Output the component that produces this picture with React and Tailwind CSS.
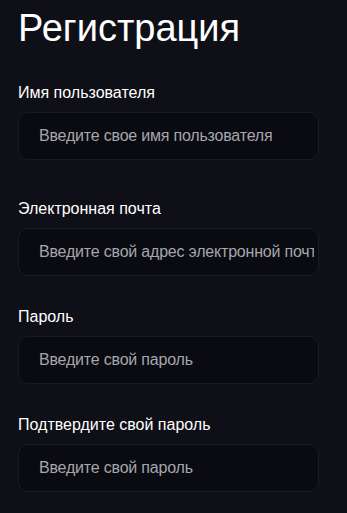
import React, { useState } from "react";

const fields = [
  { id: "username", label: "Имя пользователя", type: "text", placeholder: "Введите свое имя пользователя", wrap: "mt-[34px] mb-[39px]" },
  { id: "email", label: "Электронная почта", type: "email", placeholder: "Введите свой адрес электронной почты", wrap: "mb-[31px]" },
  { id: "password", label: "Пароль", type: "password", placeholder: "Введите свой пароль", wrap: "mb-[31px]" },
  { id: "confirm", label: "Подтвердите свой пароль", type: "password", placeholder: "Введите свой пароль", wrap: "" },
];

export default function App() {
  const [values, setValues] = useState({});

  return (
    <div
      className="min-h-[513px] bg-[#0f0f17] px-[18px] pt-[7px] text-white"
      style={{ fontFamily: '"Liberation Sans", Arial, sans-serif' }}
    >
      <h1 className="text-[38px] leading-[42px] font-normal">Регистрация</h1>

      {fields.map((f) => (
        <div key={f.id} className={f.wrap}>
          <label htmlFor={f.id} className="block text-base leading-5 text-white">
            {f.label}
          </label>
          <input
            id={f.id}
            type={f.type}
            value={values[f.id] || ""}
            onChange={(e) => setValues({ ...values, [f.id]: e.target.value })}
            placeholder={f.placeholder}
            className="mt-[9px] block h-12 w-[301px] rounded-[10px] border border-[#1b1b23] bg-[#0a0a11] pl-5 pr-1 text-base tracking-[-0.2px] text-white outline-none placeholder:text-[#a6a6ab]"
          />
        </div>
      ))}
    </div>
  );
}
